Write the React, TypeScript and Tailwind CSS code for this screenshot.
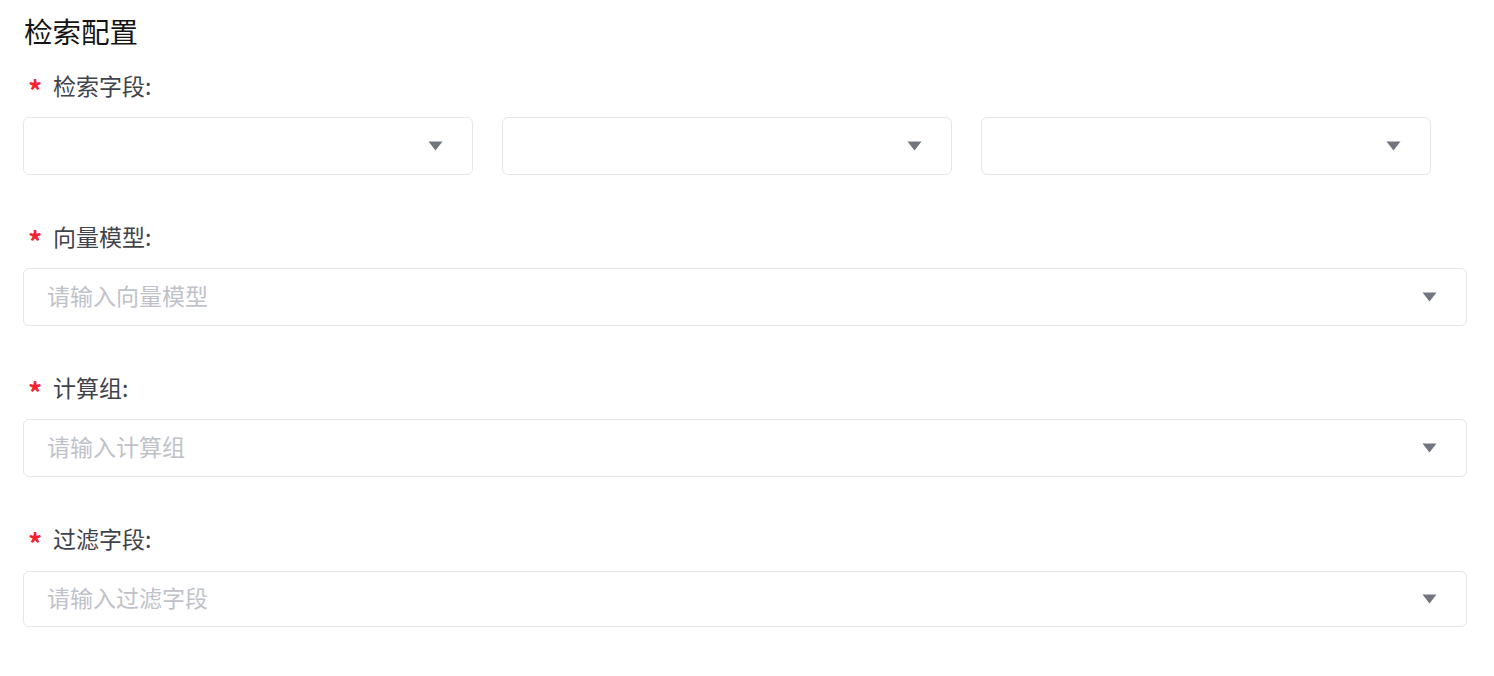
import React from 'react';

const font = { fontFamily: '"Noto Sans CJK SC", "Noto Sans", sans-serif' };

const Caret = () => (
    <svg width="15" height="10" viewBox="0 0 15 10" className="shrink-0">
        <path d="M0.5 0.5h14L7.5 9.5z" fill="#71757f" />
    </svg>
);

const SelectBox = ({ placeholder, className = '' }: { placeholder?: string; className?: string }) => (
    <div className={`flex items-center justify-between border border-[#e4e6eb] rounded-[6px] bg-white pl-[23px] pr-[29px] ${className}`}>
        <span className="text-[23px] text-[#bfc2c9] leading-none -mt-[3px]">{placeholder}</span>
        <Caret />
    </div>
);

const Label = ({ text }: { text: string }) => (
    <div className="flex items-center h-[30px] pl-[5px] -mt-[2px]">
        <span className="text-[#f5222d] text-[28px] font-bold w-[25px] leading-none pt-[9px]">*</span>
        <span className="text-[23px] text-[#3f434b] leading-none">{text}</span>
    </div>
);

export default function App() {
    return (
        <div className="w-[1494px] h-[676px] bg-white pl-[23px] pr-[27px] pt-[13px]" style={font}>
            <h2 className="text-[28.5px] leading-[36px] text-[#151515] font-normal pl-[1px]">检索配置</h2>

            <div className="mt-[23px]">
                <Label text="检索字段:" />
                <div className="flex gap-[29px] mt-[17px]">
                    <SelectBox className="w-[450px] h-[58px]" />
                    <SelectBox className="w-[450px] h-[58px]" />
                    <SelectBox className="w-[450px] h-[58px]" />
                </div>
            </div>

            <div className="mt-[48px]">
                <Label text="向量模型:" />
                <SelectBox placeholder="请输入向量模型" className="mt-[17px] h-[58px]" />
            </div>

            <div className="mt-[48px]">
                <Label text="计算组:" />
                <SelectBox placeholder="请输入计算组" className="mt-[17px] h-[58px]" />
            </div>

            <div className="mt-[48px]">
                <Label text="过滤字段:" />
                <SelectBox placeholder="请输入过滤字段" className="mt-[18px] h-[56px]" />
            </div>
        </div>
    );
}
